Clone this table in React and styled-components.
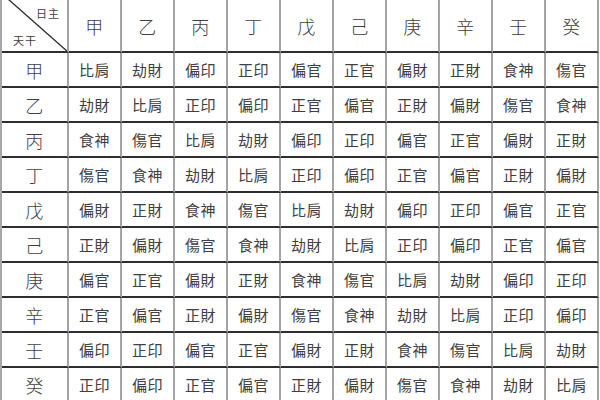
import { Fragment } from "react";
import styled, { createGlobalStyle } from "styled-components";

const GlobalStyle = createGlobalStyle`
  html, body {
    margin: 0;
    padding: 0;
    background: #ffffff;
  }
  body {
    width: 600px;
    height: 400px;
    overflow: hidden;
    font-family: "Noto Sans CJK TC", "Noto Sans CJK SC", sans-serif;
  }
`;

const stems = ["甲", "乙", "丙", "丁", "戊", "己", "庚", "辛", "壬", "癸"];

const rows = [
  ["比肩", "劫財", "偏印", "正印", "偏官", "正官", "偏財", "正財", "食神", "傷官"],
  ["劫財", "比肩", "正印", "偏印", "正官", "偏官", "正財", "偏財", "傷官", "食神"],
  ["食神", "傷官", "比肩", "劫財", "偏印", "正印", "偏官", "正官", "偏財", "正財"],
  ["傷官", "食神", "劫財", "比肩", "正印", "偏印", "正官", "偏官", "正財", "偏財"],
  ["偏財", "正財", "食神", "傷官", "比肩", "劫財", "偏印", "正印", "偏官", "正官"],
  ["正財", "偏財", "傷官", "食神", "劫財", "比肩", "正印", "偏印", "正官", "偏官"],
  ["偏官", "正官", "偏財", "正財", "食神", "傷官", "比肩", "劫財", "偏印", "正印"],
  ["正官", "偏官", "正財", "偏財", "傷官", "食神", "劫財", "比肩", "正印", "偏印"],
  ["偏印", "正印", "偏官", "正官", "偏財", "正財", "食神", "傷官", "比肩", "劫財"],
  ["正印", "偏印", "正官", "偏官", "正財", "偏財", "傷官", "食神", "劫財", "比肩"],
];

const Table = styled.div`
  display: grid;
  grid-template-columns: 67px repeat(10, 53px);
  grid-template-rows: 53px repeat(10, 35px);
  width: 598px;
  border-left: 2px solid #a8a8a8;
  box-sizing: border-box;
`;

const Cell = styled.div`
  display: flex;
  align-items: center;
  justify-content: center;
  box-sizing: border-box;
  border-right: 2px solid #a4a4a4;
  border-bottom: 2px solid #2e2e2e;
  color: #404040;
  font-size: ${(p) => (p.$big ? "18px" : "15px")};
  font-weight: ${(p) => (p.$big ? 300 : 400)};
  letter-spacing: 0.5px;
  line-height: 1;
`;

const Corner = styled.div`
  position: relative;
  box-sizing: border-box;
  border-right: 2px solid #a4a4a4;
  border-bottom: 2px solid #2e2e2e;
  color: #404040;
  font-size: 11px;
`;

const Diagonal = styled.svg`
  position: absolute;
  inset: 0;
  width: 100%;
  height: 100%;
`;

const CornerLabel = styled.span`
  position: absolute;
  top: ${(p) => p.$top}px;
  left: ${(p) => p.$left}px;
  letter-spacing: 1px;
`;

export default function App() {
  return (
    <>
      <GlobalStyle />
      <Table>
        <Corner>
          <Diagonal viewBox="0 0 65 51" preserveAspectRatio="none">
            <line x1="6" y1="-1" x2="66" y2="52" stroke="#2a2a2a" strokeWidth="1.3" />
          </Diagonal>
          <CornerLabel $top={5} $left={34}>日主</CornerLabel>
          <CornerLabel $top={32} $left={11}>天干</CornerLabel>
        </Corner>
        {stems.map((s) => (
          <Cell key={s} $big>{s}</Cell>
        ))}
        {rows.map((row, i) => (
          <Fragment key={stems[i]}>
            <Cell $big>{stems[i]}</Cell>
            {row.map((v, j) => (
              <Cell key={j}>{v}</Cell>
            ))}
          </Fragment>
        ))}
      </Table>
    </>
  );
}
